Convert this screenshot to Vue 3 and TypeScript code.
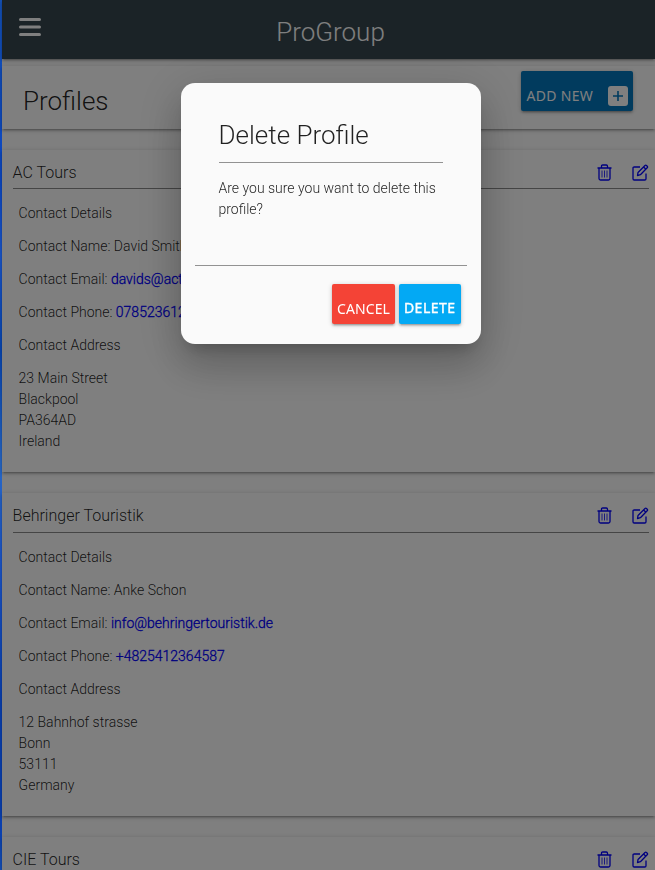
<script setup lang="ts">
interface Profile {
  name: string
  contact?: string
  email?: string
  phone?: string
  address?: string[]
}

const profiles: Profile[] = [
  {
    name: 'AC Tours',
    contact: 'David Smith',
    email: 'davids@actours.ie',
    phone: '0785236124',
    address: ['23 Main Street', 'Blackpool', 'PA364AD', 'Ireland'],
  },
  {
    name: 'Behringer Touristik',
    contact: 'Anke Schon',
    email: 'info@behringertouristik.de',
    phone: '+4825412364587',
    address: ['12 Bahnhof strasse', 'Bonn', '53111', 'Germany'],
  },
  { name: 'CIE Tours' },
]
</script>

<template>
  <div class="screen">
    <div class="edge"></div>
    <div class="page">
      <header class="topbar">
        <svg class="menu" width="22" height="19" viewBox="0 0 22 19">
          <path d="M1.5 1.5h19M1.5 9h19M1.5 16.5h19" stroke="#fff" stroke-width="3" stroke-linecap="round" />
        </svg>
        <h1 class="brand">ProGroup</h1>
      </header>

      <section class="heading">
        <h2>Profiles</h2>
        <button class="btn add">
          <span>ADD NEW</span>
          <svg width="20" height="20" viewBox="0 0 20 20">
            <rect width="20" height="20" rx="3" fill="#fff" />
            <path d="M10 5v10M5 10h10" stroke="#0277bd" stroke-width="1.6" />
          </svg>
        </button>
      </section>

      <article v-for="p in profiles" :key="p.name" class="card">
        <div class="card-head">
          <h3>{{ p.name }}</h3>
          <div class="actions">
            <svg width="15" height="17" viewBox="0 0 15 17" fill="none" stroke="#00f">
              <path d="M.5 4h14M4.5 4V2.2Q4.5 1 5.7 1h3.6q1.2 0 1.2 1.2V4M2 4v10.5Q2 16 3.5 16h8q1.500 0 1.500-1.500V4" stroke-width="1.3" />
              <path d="M5 6.500v7M7.500 6.500v7M10 6.500v7" stroke-width=".8" />
            </svg>
            <svg width="17" height="17" viewBox="0 0 17 17" fill="none" stroke="#00f" stroke-width="1.3" stroke-linejoin="round">
              <path d="M8 3H2.200Q1 3 1 4.200v10.600Q1 16 2.200 16h10.600q1.200 0 1.200-1.200V9.500" />
              <path d="M5.500 11.500l.5-3L13 1.500q.7-.7 1.500 0l.7.7q.8.8 0 1.500l-6.800 7zM11.600 3l2.300 2.300" />
            </svg>
          </div>
        </div>
        <div v-if="p.contact" class="details">
          <p>Contact Details</p>
          <p>Contact Name: {{ p.contact }}</p>
          <p>Contact Email: <a>{{ p.email }}</a></p>
          <p>Contact Phone: <a>{{ p.phone }}</a></p>
          <p>Contact Address</p>
          <p><span v-for="line in p.address" :key="line" class="line">{{ line }}</span></p>
        </div>
      </article>
    </div>

    <div class="overlay"></div>
    <div class="modal">
      <div class="modal-content">
        <h2>Delete Profile</h2>
        <p>Are you sure you want to delete this profile?</p>
      </div>
      <div class="modal-footer">
        <button class="btn cancel">CANCEL</button>
        <button class="btn delete">DELETE</button>
      </div>
    </div>
  </div>
</template>

<style>
body {
  margin: 0;
  overflow: hidden;
}
</style>

<style scoped>
* {
  box-sizing: border-box;
}
h1,
h2,
h3,
p {
  margin: 0;
  font-weight: 300;
}
.screen {
  display: flex;
  height: 870px;
  overflow: hidden;
  font: 300 14px/21px Roboto, sans-serif;
  color: rgba(0, 0, 0, 0.87);
}
.edge {
  flex: none;
  width: 2px;
  background: linear-gradient(#1450b4 0, #0c46c0 180px, #1a55c8 255px, #0845b0 350px, #2766c4 465px, #1c55c8 560px, #0a3fae 700px, #0a3fae 830px, #1550b8 870px);
}
.page {
  flex: 1;
  background: #fff;
}
.topbar {
  position: relative;
  display: grid;
  grid-template-columns: 1fr auto 1fr;
  height: 59px;
  padding: 0 0 0 17px;
  background: #37474f;
  box-shadow: 0 2px 2px rgba(0, 0, 0, 0.14), 0 3px 1px -2px rgba(0, 0, 0, 0.12), 0 1px 5px rgba(0, 0, 0, 0.2);
}
.menu {
  margin-top: 18px;
}
.brand {
  margin-right: 13px;
  font-size: 26px;
  line-height: 64px;
  color: #fff;
}
.heading,
.card {
  box-shadow: 0 2px 2px rgba(0, 0, 0, 0.14), 0 3px 1px -2px rgba(0, 0, 0, 0.12), 0 1px 5px rgba(0, 0, 0, 0.2);
}
.heading {
  display: flex;
  justify-content: space-between;
  height: 63px;
  margin-top: 7px;
  padding: 5px 22px 0 21px;
}
.heading h2 {
  font-size: 26px;
  line-height: 60px;
}
.btn {
  height: 40px;
  padding: 0;
  border: 0;
  border-radius: 2px;
  color: #fff;
  font: 400 14px/50px "Noto Sans", sans-serif;
  white-space: nowrap;
  box-shadow: 0 2px 2px rgba(0, 0, 0, 0.14), 0 3px 1px -2px rgba(0, 0, 0, 0.12), 0 1px 5px rgba(0, 0, 0, 0.2);
}
.add {
  display: flex;
  justify-content: space-between;
  align-items: center;
  width: 112px;
  padding: 10px 5px 0 5.500px;
  background: #0277bd;
  letter-spacing: 0.3px;
}
.card {
  height: 322.8px;
  margin-top: 21px;
  padding: 0 6px 0 10.6px;
}
.heading + .card {
  margin-top: 20.6px;
}
.card-head {
  display: flex;
  justify-content: space-between;
  height: 39.3px;
  border-bottom: 1px solid #8a8a8a;
}
.card-head h3 {
  font-size: 16px;
  line-height: 45px;
}
.actions {
  display: flex;
  gap: 20px;
  padding-top: 14px;
}
.details {
  display: flex;
  flex-direction: column;
  gap: 12px;
  padding: 14px 0 0 6px;
}
.details a {
  color: #00f;
  -webkit-text-stroke: 0.3px #00f;
}
.line {
  display: block;
}
.overlay {
  position: fixed;
  inset: 0 0 0 2px;
  background: rgba(0, 0, 0, 0.5);
}
.modal {
  position: fixed;
  top: 83px;
  left: 181px;
  width: 300px;
  height: 261px;
  padding: 0 14px;
  border-radius: 14px;
  background: #fafafa;
  box-shadow: 0 24px 38px 3px rgba(0, 0, 0, 0.14), 0 9px 46px 8px rgba(0, 0, 0, 0.12), 0 11px 15px -7px rgba(0, 0, 0, 0.2);
}
.modal-content {
  height: 182px;
  padding: 24px 24px 0;
}
.modal-content h2 {
  height: 56px;
  font-size: 26px;
  line-height: 56px;
  text-indent: -0.500px;
  border-bottom: 1px solid #929292;
}
.modal-content p {
  margin: 0 -4px 0 -0.500px;
  padding-top: 15px;
}
.modal-footer {
  display: flex;
  justify-content: flex-end;
  gap: 4px;
  padding: 18px 6px 0 0;
  border-top: 1px solid #929292;
}
.cancel {
  width: 63px;
  background: #f44336;
  letter-spacing: 0.1px;
}
.delete {
  width: 62px;
  background: #03a9f4;
  line-height: 48px;
  letter-spacing: 0.5px;
  text-indent: -0.5px;
  -webkit-text-stroke: 0.4px #fff;
}
</style>
